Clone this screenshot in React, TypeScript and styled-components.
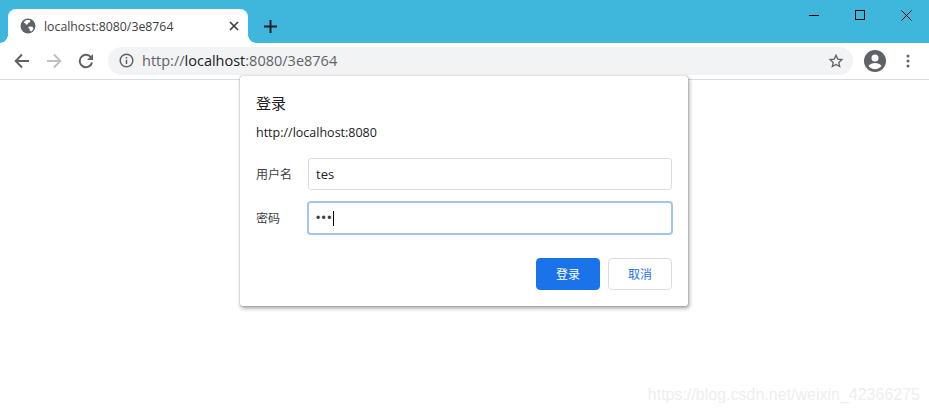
import React from 'react'
import styled, { createGlobalStyle } from 'styled-components'

const GlobalStyle = createGlobalStyle`
  html, body {
    margin: 0;
    padding: 0;
    background: #fff;
    font-family: 'Open Sans', 'Noto Sans CJK SC', sans-serif;
  }
`

const Page = styled.div`
  position: relative;
  width: 929px;
  height: 413px;
  overflow: hidden;
  background: #fff;
`

/* --------------------------------
 * Tab strip
 * -------------------------------- */

const TabStrip = styled.div`
  display: flex;
  align-items: flex-end;
  height: 43px;
  padding-left: 8px;
  background: #3fb6db;
`

const Tab = styled.div`
  position: relative;
  display: flex;
  align-items: center;
  width: 240px;
  height: 34px;
  box-sizing: border-box;
  padding: 0 9px 0 12px;
  background: #fff;
  border-radius: 8px 8px 0 0;

  &::before,
  &::after {
    content: '';
    position: absolute;
    bottom: 0;
    width: 8px;
    height: 8px;
    background: radial-gradient(circle at 0 0, transparent 7.5px, #fff 8px);
  }
  &::before {
    left: -8px;
  }
  &::after {
    right: -8px;
    transform: scaleX(-1);
  }
`

const TabTitle = styled.span`
  flex: 1;
  margin-left: 8px;
  font-size: 12.3px;
  color: #3c4043;
  white-space: nowrap;
`

const NewTab = styled.div`
  display: flex;
  align-items: center;
  justify-content: center;
  width: 28px;
  height: 34px;
  margin-left: 8px;
`

const WindowControls = styled.div`
  display: flex;
  margin-left: auto;
  align-self: flex-start;
`

const WindowButton = styled.div`
  display: flex;
  align-items: center;
  justify-content: center;
  width: 46px;
  height: 30px;
`

/* --------------------------------
 * Toolbar
 * -------------------------------- */

const Toolbar = styled.div`
  display: flex;
  align-items: center;
  height: 37px;
  box-sizing: border-box;
  padding: 0 0 1px 10px;
  background: #fff;
  border-bottom: 1px solid #dadce0;
`

const NavButton = styled.div`
  display: flex;
  align-items: center;
  justify-content: center;
  width: 24px;
  height: 24px;
  margin-right: 8px;
`

const Omnibox = styled.div`
  display: flex;
  align-items: center;
  width: 745px;
  height: 28px;
  box-sizing: border-box;
  margin-left: 2px;
  padding: 0 9px 0 11px;
  border-radius: 14px;
  background: #f1f3f4;
`

const Url = styled.span`
  flex: 1;
  margin-left: 8px;
  font-size: 14.5px;
  color: #5f6368;
`

const Host = styled.span`
  color: #202124;
`

const ProfileButton = styled.div`
  display: flex;
  align-items: center;
  justify-content: center;
  margin-left: 11px;
  width: 22px;
  height: 22px;
`

const MenuButton = styled.div`
  display: flex;
  align-items: center;
  justify-content: center;
  margin-left: 14px;
  width: 16px;
  height: 22px;
`

/* --------------------------------
 * Login dialog
 * -------------------------------- */

const Dialog = styled.div`
  position: absolute;
  left: 240px;
  top: 76px;
  width: 448px;
  height: 230px;
  box-sizing: border-box;
  padding: 17px 16px 16px;
  background: #fff;
  border-radius: 2px;
  box-shadow: 0 0 1px rgba(0, 0, 0, 0.6), 1px 2px 4px rgba(0, 0, 0, 0.4);
`

const DialogTitle = styled.div`
  font-size: 15px;
  line-height: 20px;
  color: #202124;
`

const Origin = styled.div`
  margin-top: 11px;
  font-size: 12.5px;
  line-height: 18px;
  color: #202124;
`

const Form = styled.div`
  display: grid;
  grid-template-columns: 52px 1fr;
  row-gap: 12px;
  align-items: center;
  margin-top: 16px;
`

const FieldLabel = styled.label`
  font-size: 12px;
  color: #3c4043;
`

const Field = styled.div<{ $focused?: boolean }>`
  display: flex;
  align-items: center;
  height: 32px;
  box-sizing: border-box;
  padding: 0 7px;
  font-size: 13px;
  color: #202124;
  background: #fff;
  border: 1px solid ${({ $focused }) => ($focused ? '#a3c4f0' : '#dadce0')};
  box-shadow: ${({ $focused }) => ($focused ? '0 0 0 1px #a3c4f0' : 'none')};
  border-radius: 3px;
`

const Dots = styled.span`
  font-family: 'Liberation Sans', sans-serif;
  font-size: 12px;
  letter-spacing: 1.4px;
  color: #3c4043;
`

const Caret = styled.span`
  width: 1px;
  height: 15px;
  background: #000;
`

const Actions = styled.div`
  display: flex;
  justify-content: flex-end;
  gap: 8px;
  margin-top: 24px;
`

const Button = styled.button<{ $primary?: boolean }>`
  width: 64px;
  height: 32px;
  padding: 0;
  font-family: inherit;
  font-size: 12px;
  border-radius: 4px;
  border: 1px solid ${({ $primary }) => ($primary ? '#1a73e8' : '#dadce0')};
  background: ${({ $primary }) => ($primary ? '#1a73e8' : '#fff')};
  color: ${({ $primary }) => ($primary ? '#fff' : '#1a73e8')};
`

const Watermark = styled.div`
  position: absolute;
  right: 9px;
  bottom: 9px;
  font-family: 'Liberation Sans', sans-serif;
  font-size: 16px;
  color: #eeeeee;
`

/* --------------------------------
 * Component
 * -------------------------------- */

const App: React.FC = () => (
  <Page>
    <GlobalStyle />
    <TabStrip>
      <Tab>
        <svg width="16" height="16" viewBox="0 0 16 16">
          <circle cx="8" cy="8" r="7.500" fill="#5f6368" />
          <path
            fill="#fff"
            d="M5.500 2.500c1.500-.6 3.500-.6 4.800-.1l-.3 1.800-1.700.6-.5 1.500-1.800.4-.6-1.500L3.800 5c.3-1 .9-1.900 1.700-2.500zM9 8.500l3.500.3 1 1.600c-.4 1.300-1.300 2.300-2.400 3l-1.300-.8-.3-1.800L8.200 10z"
          />
        </svg>
        <TabTitle>localhost:8080/3e8764</TabTitle>
        <svg width="10" height="10" viewBox="0 0 10 10">
          <path d="M1 1l8 8M9 1l-8 8" stroke="#3c4043" strokeWidth="1.700" />
        </svg>
      </Tab>
      <NewTab>
        <svg width="13" height="13" viewBox="0 0 13 13">
          <path d="M6.500 0v13M0 6.500h13" stroke="#202124" strokeWidth="2" />
        </svg>
      </NewTab>
      <WindowControls>
        <WindowButton>
          <svg width="10" height="10" viewBox="0 0 10 10">
            <path d="M0 5.500h10" stroke="#000" />
          </svg>
        </WindowButton>
        <WindowButton>
          <svg width="10" height="10" viewBox="0 0 10 10">
            <rect x=".5" y=".5" width="9" height="9" fill="none" stroke="#000" />
          </svg>
        </WindowButton>
        <WindowButton>
          <svg width="11" height="11" viewBox="0 0 11 11">
            <path d="M.5.5l10 10M10.500.5l-10 10" stroke="#000" />
          </svg>
        </WindowButton>
      </WindowControls>
    </TabStrip>
    <Toolbar>
      <NavButton>
        <svg width="16" height="16" viewBox="0 0 16 16">
          <path d="M15 8H2M8 1.500L1.700 8 8 14.500" fill="none" stroke="#5f6368" strokeWidth="2" />
        </svg>
      </NavButton>
      <NavButton>
        <svg width="16" height="16" viewBox="0 0 16 16">
          <path d="M1 8h13M8 1.500L14.300 8 8 14.500" fill="none" stroke="#bdc1c6" strokeWidth="2" />
        </svg>
      </NavButton>
      <NavButton>
        <svg width="16" height="16" viewBox="0 0 16 16">
          <path d="M13.200 4.700A6.200 6.200 0 1 0 14 9.500" fill="none" stroke="#5f6368" strokeWidth="2" />
          <path d="M15 1v6H9z" fill="#5f6368" />
        </svg>
      </NavButton>
      <Omnibox>
        <svg width="15" height="15" viewBox="0 0 15 15">
          <circle cx="7.500" cy="7.500" r="6.300" fill="none" stroke="#5f6368" strokeWidth="1.500" />
          <path d="M7.500 6.800v4.200M7.500 4v1.500" stroke="#5f6368" strokeWidth="1.500" />
        </svg>
        <Url>
          http://<Host>localhost</Host>:8080/3e8764
        </Url>
        <svg width="16" height="16" viewBox="0 0 24 24">
          <path
            fill="none"
            stroke="#5f6368"
            strokeWidth="2"
            d="M12 3.500l2.600 5.700 6.200.7-4.600 4.200 1.300 6.100-5.500-3.100-5.500 3.100 1.300-6.100-4.600-4.200 6.200-.7z"
          />
        </svg>
      </Omnibox>
      <ProfileButton>
        <svg width="22" height="22" viewBox="0 0 22 22">
          <circle cx="11" cy="11" r="11" fill="#5f6368" />
          <circle cx="11" cy="8" r="3.500" fill="#fff" />
          <path d="M4.500 16c1.500-2.300 4-3 6.500-3s5 .7 6.500 3c-1.500 2-3.800 3.200-6.500 3.200S6 18 4.500 16z" fill="#fff" />
        </svg>
      </ProfileButton>
      <MenuButton>
        <svg width="4" height="14" viewBox="0 0 4 14">
          <circle cx="2" cy="2" r="1.500" fill="#5f6368" />
          <circle cx="2" cy="7" r="1.500" fill="#5f6368" />
          <circle cx="2" cy="12" r="1.500" fill="#5f6368" />
        </svg>
      </MenuButton>
    </Toolbar>
    <Dialog>
      <DialogTitle>登录</DialogTitle>
      <Origin>http://localhost:8080</Origin>
      <Form>
        <FieldLabel>用户名</FieldLabel>
        <Field>tes</Field>
        <FieldLabel>密码</FieldLabel>
        <Field $focused>
          <Dots>•••</Dots>
          <Caret />
        </Field>
      </Form>
      <Actions>
        <Button $primary>登录</Button>
        <Button>取消</Button>
      </Actions>
    </Dialog>
    <Watermark>https://blog.csdn.net/weixin_42366275</Watermark>
  </Page>
)

export default App
